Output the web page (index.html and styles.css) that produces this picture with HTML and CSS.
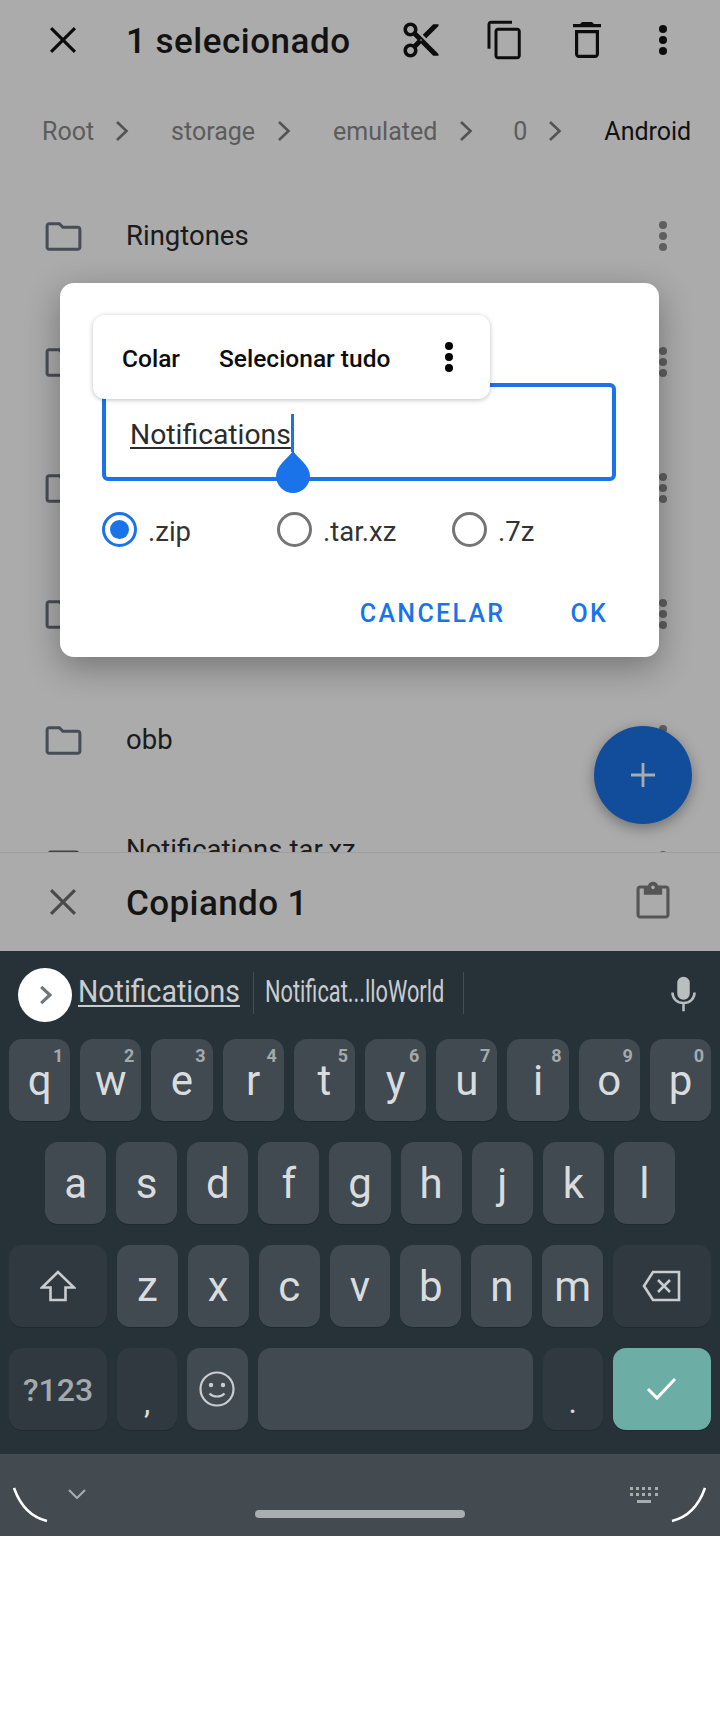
FILE: index.html
```html
<!DOCTYPE html>
<html lang="pt">
<head>
    <meta charset="UTF-8">
    <meta name="viewport" content="width=device-width, initial-scale=1.0">
    <title>Comprimir</title>
    <link rel="stylesheet" href="styles.css">
</head>
<body>
    <div class="screen">
        <div class="app">
            <header class="topbar">
                <svg class="ico-close" viewBox="0 0 24 24"><path d="M5.500 5.500l13 13M18.500 5.500l-13 13"/></svg>
                <h1 class="topbar-title">1 selecionado</h1>
                <svg class="ico-cut" viewBox="0 0 24 24"><path d="M9.640 7.640c.23-.5.36-1.050.36-1.640 0-2.210-1.790-4-4-4S2 3.790 2 6s1.790 4 4 4c.59 0 1.140-.13 1.640-.36L10 12l-2.360 2.360C7.140 14.130 6.590 14 6 14c-2.210 0-4 1.790-4 4s1.790 4 4 4 4-1.790 4-4c0-.59-.13-1.140-.36-1.640L12 14l7 7h3v-1L9.640 7.640zM6 8c-1.100 0-2-.89-2-2s.9-2 2-2 2 .89 2 2-.9 2-2 2zm0 12c-1.100 0-2-.89-2-2s.9-2 2-2 2 .89 2 2-.9 2-2 2zm6-7.500c-.28 0-.5-.22-.5-.5s.22-.5.5-.5.5.22.5.5-.22.5-.5.5zM19 3l-6 6 2 2 7-7V3h-3z"/></svg>
                <svg class="ico-copy" viewBox="0 0 24 24"><path d="M16 1H4c-1.100 0-2 .9-2 2v14h1.700V2.700H16V1zm3 4H8c-1.100 0-2 .9-2 2v14c0 1.100.9 2 2 2h11c1.100 0 2-.9 2-2V7c0-1.100-.9-2-2-2zm.3 16.300H7.700V6.700h11.600v14.600z"/></svg>
                <svg class="ico-trash" viewBox="0 0 24 24"><path d="M6 19c0 1.100.9 2 2 2h8c1.100 0 2-.9 2-2V7H6v12zM7.600 8.600h8.800v10.800H7.600V8.600zM15.500 4l-1-1h-5l-1 1H5v1.600h14V4z"/></svg>
                <div class="dots dots-dark"><i></i><i></i><i></i></div>
            </header>

            <nav class="crumbs">
                <span class="crumb crumb-root">Root</span>
                <svg class="chev" viewBox="0 0 14 20"><path d="M2 1l9.500 9L2 19"/></svg>
                <span class="crumb crumb-storage">storage</span>
                <svg class="chev" viewBox="0 0 14 20"><path d="M2 1l9.500 9L2 19"/></svg>
                <span class="crumb crumb-emulated">emulated</span>
                <svg class="chev" viewBox="0 0 14 20"><path d="M2 1l9.500 9L2 19"/></svg>
                <span class="crumb crumb-zero">0</span>
                <svg class="chev" viewBox="0 0 14 20"><path d="M2 1l9.500 9L2 19"/></svg>
                <span class="crumb crumb-current">Android</span>
            </nav>

            <ul class="files">
                <li class="file">
                    <svg class="ico-folder" viewBox="0 0 24 24"><use href="#folder"/></svg>
                    <span class="file-name">Ringtones</span>
                    <div class="dots"><i></i><i></i><i></i></div>
                </li>
                <li class="file">
                    <svg class="ico-folder" viewBox="0 0 24 24"><use href="#folder"/></svg>
                    <div class="dots"><i></i><i></i><i></i></div>
                </li>
                <li class="file">
                    <svg class="ico-folder" viewBox="0 0 24 24"><use href="#folder"/></svg>
                    <div class="dots"><i></i><i></i><i></i></div>
                </li>
                <li class="file">
                    <svg class="ico-folder" viewBox="0 0 24 24"><use href="#folder"/></svg>
                    <div class="dots"><i></i><i></i><i></i></div>
                </li>
                <li class="file">
                    <svg class="ico-folder" viewBox="0 0 24 24"><use href="#folder"/></svg>
                    <span class="file-name">obb</span>
                    <div class="dots"><i></i><i></i><i></i></div>
                </li>
                <li class="file">
                    <svg class="ico-folder ico-archive" viewBox="0 0 24 24"><path d="M5 3h14c1.100 0 2 .9 2 2v14c0 1.100-.9 2-2 2H5c-1.100 0-2-.9-2-2V5c0-1.100.9-2 2-2z"/></svg>
                    <span class="file-name file-name-top">Notifications.tar.xz</span>
                    <div class="dots"><i></i><i></i><i></i></div>
                </li>
            </ul>

            <div class="fab">
                <svg viewBox="0 0 26 26"><path d="M13 1v24M1 13h24"/></svg>
            </div>

            <footer class="copybar">
                <svg class="ico-close ico-close-grey" viewBox="0 0 24 24"><path d="M5.500 5.500l13 13M18.500 5.500l-13 13"/></svg>
                <span class="copybar-title">Copiando 1</span>
                <svg class="ico-clip" viewBox="0 0 24 24"><path d="M19 3h-4.180C14.400 1.840 13.300 1 12 1c-1.300 0-2.400.84-2.820 2H5c-1.100 0-2 .9-2 2v14c0 1.100.9 2 2 2h14c1.100 0 2-.9 2-2V5c0-1.100-.9-2-2-2zm-7 0c.55 0 1 .45 1 1s-.45 1-1 1-1-.45-1-1 .45-1 1-1zm7.300 16.300H4.700V4.700H7V8h10V4.700h2.300v14.600z"/></svg>
            </footer>

            <div class="scrim"></div>
        </div>

        <div class="dialog">
            <div class="field">
                <span class="field-text">Notifications</span><span class="caret"></span>
                <svg class="handle" viewBox="0 0 36 42"><path d="M18 0C24 8 35 15 35 25a17 17 0 0 1-34 0C1 15 12 8 18 0z"/></svg>
            </div>
            <div class="popup">
                <span class="popup-item">Colar</span>
                <span class="popup-item popup-item-all">Selecionar tudo</span>
                <div class="dots dots-black"><i></i><i></i><i></i></div>
            </div>
            <div class="radios">
                <label class="radio radio-zip"><span class="radio-mark is-on"></span><span class="radio-text">.zip</span></label>
                <label class="radio radio-tar"><span class="radio-mark"></span><span class="radio-text">.tar.xz</span></label>
                <label class="radio"><span class="radio-mark"></span><span class="radio-text">.7z</span></label>
            </div>
            <div class="actions">
                <button class="action">CANCELAR</button>
                <button class="action">OK</button>
            </div>
        </div>
    </div>

    <div class="keyboard">
        <div class="strip">
            <div class="strip-toggle">
                <svg viewBox="0 0 24 24"><path d="M8.500 4.500l8 7.500-8 7.500"/></svg>
            </div>
            <span class="sug sug-main">Notifications</span>
            <span class="strip-sep"></span>
            <span class="sug sug-alt">Notificat...lloWorld</span>
            <span class="strip-sep"></span>
            <svg class="ico-mic" viewBox="0 0 26 36"><path class="mic-body" d="M13 0a6.500 6.500 0 0 1 6.500 6.500v11a6.500 6.500 0 0 1-13 0v-11A6.500 6.500 0 0 1 13 0z"/><path class="mic-arm" d="M1.500 16.500c0 6.500 5 10.800 11.500 10.800s11.500-4.300 11.500-10.800M13 27v9"/></svg>
        </div>

        <div class="keys">
            <div class="key-row">
                <div class="key">q<sup>1</sup></div>
                <div class="key">w<sup>2</sup></div>
                <div class="key">e<sup>3</sup></div>
                <div class="key">r<sup>4</sup></div>
                <div class="key">t<sup>5</sup></div>
                <div class="key">y<sup>6</sup></div>
                <div class="key">u<sup>7</sup></div>
                <div class="key">i<sup>8</sup></div>
                <div class="key">o<sup>9</sup></div>
                <div class="key">p<sup>0</sup></div>
            </div>
            <div class="key-row key-row-home">
                <div class="key">a</div>
                <div class="key">s</div>
                <div class="key">d</div>
                <div class="key">f</div>
                <div class="key">g</div>
                <div class="key">h</div>
                <div class="key">j</div>
                <div class="key">k</div>
                <div class="key">l</div>
            </div>
            <div class="key-row">
                <div class="key key-wide key-fn">
                    <svg class="ico-shift" viewBox="0 0 36 32"><path d="M18 2L2 17.500h8.500V30h15V17.500H34z"/></svg>
                </div>
                <div class="key">z</div>
                <div class="key">x</div>
                <div class="key">c</div>
                <div class="key">v</div>
                <div class="key">b</div>
                <div class="key">n</div>
                <div class="key">m</div>
                <div class="key key-wide key-fn">
                    <svg class="ico-del" viewBox="0 0 40 32"><path d="M11 2h26v28H11L2 16zM16 10l12 12M28 10L16 22"/></svg>
                </div>
            </div>
            <div class="key-row">
                <div class="key key-wide key-fn key-sym">?123</div>
                <div class="key key-fn key-punct">,</div>
                <div class="key">
                    <svg class="ico-emoji" viewBox="0 0 36 36"><circle class="face" cx="18" cy="18" r="16.500"/><circle cx="12" cy="14" r="2.200"/><circle cx="24" cy="14" r="2.200"/><path class="face" d="M10.500 22.500c3.500 4 11.500 4 15 0"/></svg>
                </div>
                <div class="key key-space"></div>
                <div class="key key-fn key-punct">.</div>
                <div class="key key-wide key-enter">
                    <svg class="ico-check" viewBox="0 0 32 24"><path d="M2 12l9 9L29 2"/></svg>
                </div>
            </div>
        </div>

        <div class="navbar">
            <svg class="ico-hide" viewBox="0 0 18 10"><path d="M1 1l8 8 8-8"/></svg>
            <div class="pill"></div>
            <svg class="ico-kbd" viewBox="0 0 28 16"><path d="M0 0h3v3H0zM6 0h3v3H6zM12 0h3v3h-3zM18 0h3v3h-3zM25 0h3v3h-3zM0 6h3v3H0zM6 6h3v3H6zM12 6h3v3h-3zM18 6h3v3h-3zM25 6h3v3h-3zM7 13h14v3H7z"/></svg>
            <svg class="corner corner-left" viewBox="0 0 36 36"><path d="M1 1c6 17 16 29 33 33"/></svg>
            <svg class="corner corner-right" viewBox="0 0 36 36"><path d="M35 1c-6 17-16 29-33 33"/></svg>
        </div>
    </div>

    <svg class="defs" width="0" height="0"><defs><path id="folder" d="M10 4H4c-1.100 0-1.990.9-1.990 2L2 18c0 1.100.9 2 2 2h16c1.100 0 2-.9 2-2V8c0-1.100-.9-2-2-2h-8l-2-2zm10.300 14.300H3.700V5.700h5.600l2 2h9v10.600z"/></defs></svg>
</body>
</html>
```

FILE: styles.css
```css
* {
    box-sizing: border-box;
}

html, body {
    margin: 0;
    padding: 0;
    background-color: #fff;
}

body {
    font-family: Roboto, "Noto Sans", sans-serif;
    width: 720px;
    height: 1712px;
    overflow: hidden;
}

.defs {
    position: absolute;
}

svg {
    display: block;
    flex: none;
}

/* app behind the dialog */
.screen {
    position: relative;
    height: 951px;
}

.app {
    position: relative;
    height: 951px;
    display: flex;
    flex-direction: column;
    background-color: #fff;
    overflow: hidden;
}

.scrim {
    position: absolute;
    inset: 0;
    background-color: rgba(0, 0, 0, 0.33);
}

.topbar {
    height: 80px;
    display: flex;
    align-items: center;
    flex: none;
}

.ico-close {
    width: 44px;
    height: 44px;
    margin-left: 41px;
    fill: none;
    stroke: #111;
    stroke-width: 1.700;
}

.ico-close-grey {
    stroke: #6e6e6e;
}

.topbar-title {
    margin: 2px 0 0 41px;
    width: 274px;
    font-size: 35px;
    font-weight: 500;
    color: #1c1c1c;
    letter-spacing: 0.5px;
}

.ico-cut, .ico-copy {
    width: 42px;
    height: 42px;
    fill: #141414;
}

.ico-copy {
    margin-left: 42px;
}

.ico-trash {
    width: 48px;
    height: 48px;
    margin-left: 37px;
    fill: #141414;
}

.dots {
    width: 8px;
    display: flex;
    flex-direction: column;
    gap: 3px;
    flex: none;
    margin-left: auto;
    margin-right: 53px;
}

.dots i {
    display: block;
    width: 8px;
    height: 8px;
    border-radius: 50%;
    background-color: #8e8e8e;
}

.dots-dark i {
    background-color: #141414;
}

.dots-black {
    margin: 0;
}

.dots-black i {
    background-color: #000;
}

.crumbs {
    height: 93px;
    flex: none;
    display: flex;
    align-items: center;
    padding: 17px 0 8px 42px;
    font-size: 25px;
    color: #8a8a8a;
}

.crumb-current {
    color: #1a1a1a;
}

.chev {
    width: 14px;
    height: 20px;
    fill: none;
    stroke: #7c7c7c;
    stroke-width: 2.600;
}

.crumb-root {
    margin-right: 21px;
}

.crumb-storage {
    margin-left: 42px;
    margin-right: 22px;
}

.crumb-emulated {
    margin-left: 42px;
    margin-right: 22px;
}

.crumb-zero {
    margin-left: 40px;
    margin-right: 21px;
}

.crumb-current {
    margin-left: 42px;
}

.files {
    list-style: none;
    margin: 0;
    padding: 0;
    flex: 1;
    min-height: 0;
    overflow: hidden;
}

.file {
    height: 126px;
    display: flex;
    align-items: center;
}

.ico-folder {
    width: 43px;
    height: 43px;
    margin-left: 42px;
    fill: #6a7380;
}

.ico-archive {
    fill: #5d6570;
}

.file-name {
    margin-left: 41px;
    font-size: 27.500px;
    line-height: 32px;
    color: #2a2a2a;
}

.file-name-top {
    margin-bottom: 32px;
}

.fab {
    position: absolute;
    left: 594px;
    top: 726px;
    width: 98px;
    height: 98px;
    border-radius: 50%;
    background-color: #1a73e8;
    box-shadow: 0 4px 14px rgba(0, 0, 0, 0.35);
    display: flex;
    align-items: center;
    justify-content: center;
}

.fab svg {
    width: 26px;
    height: 26px;
    fill: none;
    stroke: #fff;
    stroke-width: 2.800;
}

.copybar {
    height: 99px;
    flex: none;
    position: relative;
    display: flex;
    align-items: center;
    background-color: #fff;
    border-top: 1px solid #ececec;
}

.copybar-title {
    margin: 3px 0 0 41px;
    font-size: 35px;
    font-weight: 500;
    color: #1f1f1f;
    letter-spacing: 0.4px;
}

.ico-clip {
    width: 44px;
    height: 44px;
    margin-left: auto;
    margin-right: 45px;
    fill: #7f7f7f;
}

/* compress dialog */
.dialog {
    position: absolute;
    left: 60px;
    top: 283px;
    width: 599px;
    height: 374px;
    padding: 100px 43px 0 42px;
    background-color: #fff;
    border-radius: 14px;
    box-shadow: 0 10px 34px rgba(0, 0, 0, 0.32);
}

.field {
    position: relative;
    height: 98px;
    padding: 31px 0 0 24px;
    display: flex;
    border: 4px solid #1a73e8;
    border-radius: 6px;
    font-size: 28.300px;
    line-height: 33px;
    color: #2b2b2b;
}

.field-text {
    height: 33px;
    text-decoration: underline;
    text-underline-offset: 3px;
    text-decoration-thickness: 1.500px;
}

.caret {
    width: 3px;
    height: 38px;
    margin-top: -4px;
    background-color: #1a73e8;
}

.handle {
    position: absolute;
    left: 169px;
    top: 64px;
    width: 36px;
    height: 42px;
    fill: #1a73e8;
}

.popup {
    position: absolute;
    left: 33px;
    top: 32px;
    width: 397px;
    height: 84px;
    display: flex;
    align-items: center;
    padding: 0 37px 0 29px;
    background-color: #fff;
    border-radius: 12px;
    box-shadow: 0 1px 5px rgba(0, 0, 0, 0.25);
    font-size: 24.500px;
    font-weight: 500;
    color: #0d0d0d;
}

.popup-item {
    padding-top: 3px;
}

.popup-item-all {
    margin-left: 39px;
    margin-right: auto;
}

.radios {
    display: flex;
    height: 35px;
    margin-top: 31px;
    font-size: 27.500px;
    color: #333;
}

.radio {
    display: flex;
    align-items: center;
    gap: 11px;
    line-height: 35px;
}

.radio-text {
    padding-top: 4px;
}

.radio-zip, .radio-tar {
    width: 175px;
}

.radio-mark {
    width: 35px;
    height: 35px;
    flex: none;
    border: 3.500px solid #757575;
    border-radius: 50%;
    position: relative;
}

.radio-mark.is-on {
    border-color: #1a73e8;
}

.radio-mark.is-on::after {
    content: "";
    position: absolute;
    inset: 5px;
    border-radius: 50%;
    background-color: #1a73e8;
}

.actions {
    display: flex;
    justify-content: flex-end;
    gap: 65px;
    margin-top: 52px;
    padding-right: 8px;
}

.action {
    padding: 0;
    border: none;
    background: none;
    font-family: inherit;
    font-size: 25px;
    line-height: 30px;
    font-weight: 500;
    letter-spacing: 2.300px;
    color: #1a73e8;
}

/* keyboard */
.keyboard {
    height: 585px;
    background-color: #263238;
    display: flex;
    flex-direction: column;
}

.strip {
    height: 88px;
    flex: none;
    display: flex;
    align-items: center;
    padding-left: 18px;
    color: #c9cdd0;
}

.strip-toggle {
    width: 54px;
    height: 54px;
    border-radius: 50%;
    background-color: #fff;
    display: flex;
    align-items: center;
    justify-content: center;
}

.strip-toggle svg {
    width: 26px;
    height: 26px;
    fill: none;
    stroke: #6f7578;
    stroke-width: 3;
}

.sug {
    display: block;
    font-size: 32px;
    line-height: 38px;
    margin-top: -8px;
    white-space: nowrap;
    transform-origin: left center;
}

.sug-main {
    width: 161px;
    margin-left: 6px;
    margin-right: 14px;
    transform: scaleX(0.89);
    text-decoration: underline;
    text-underline-offset: 3px;
    text-decoration-thickness: 1.500px;
}

.sug-alt {
    width: 180px;
    margin-left: 11px;
    margin-right: 18px;
    transform: scaleX(0.68);
}

.strip-sep {
    width: 1px;
    height: 42px;
    margin-top: -4px;
    background-color: #434e55;
}

.ico-mic {
    width: 25px;
    height: 36px;
    margin-left: 207px;
    margin-top: -2px;
}

.mic-body {
    fill: #b9bec1;
}

.mic-arm {
    fill: none;
    stroke: #b9bec1;
    stroke-width: 2.600;
}

.keys {
    display: flex;
    flex-direction: column;
    gap: 21px;
    padding: 0 9px;
}

.key-row {
    display: flex;
    gap: 10px;
    height: 82px;
}

.key-row-home {
    padding: 0 36px;
}

.key {
    flex: 1 1 0;
    position: relative;
    display: flex;
    align-items: center;
    justify-content: center;
    background-color: #414a51;
    border-radius: 13px;
    box-shadow: 0 1px 0 #1f292e;
    font-size: 42px;
    color: #d9dcde;
}

.key sup {
    position: absolute;
    top: 7px;
    right: 7px;
    font-size: 18px;
    line-height: 20px;
    font-weight: 700;
    color: #a4a9ac;
}

.key-wide {
    flex: 0 0 98px;
}

.key-fn {
    background-color: #30393f;
}

.key-sym {
    font-size: 32px;
    font-weight: 500;
    padding-top: 2px;
    color: #a4a9ac;
}

.key-punct {
    font-size: 32px;
    padding-top: 26px;
}

.key-space {
    flex: 0 0 275px;
}

.key-enter {
    background-color: #6cada6;
}

.ico-shift {
    width: 36px;
    height: 32px;
    fill: none;
    stroke: #c9cdd0;
    stroke-width: 2.600;
}

.ico-del {
    width: 40px;
    height: 32px;
    fill: none;
    stroke: #c9cdd0;
    stroke-width: 2.600;
}

.ico-emoji {
    width: 36px;
    height: 36px;
    fill: #c9cdd0;
}

.face {
    fill: none;
    stroke: #c9cdd0;
    stroke-width: 2.200;
}

.ico-check {
    width: 32px;
    height: 24px;
    fill: none;
    stroke: #fff;
    stroke-width: 3;
}

.navbar {
    position: relative;
    height: 82px;
    margin-top: 24px;
    flex: none;
    background-color: #434b51;
    display: flex;
    justify-content: center;
}

.pill {
    width: 210px;
    height: 8px;
    margin-top: 56px;
    border-radius: 4px;
    background-color: #a9aeb1;
}

.ico-hide {
    position: absolute;
    left: 68px;
    top: 35px;
    width: 18px;
    height: 10px;
    fill: none;
    stroke: #a9aeb1;
    stroke-width: 2;
}

.ico-kbd {
    position: absolute;
    left: 630px;
    top: 33px;
    width: 28px;
    height: 16px;
    fill: #a9aeb1;
}

.corner {
    position: absolute;
    top: 33px;
    width: 36px;
    height: 36px;
    fill: none;
    stroke: #fff;
    stroke-width: 2.600;
}

.corner-left {
    left: 13px;
}

.corner-right {
    left: 670px;
}
```
